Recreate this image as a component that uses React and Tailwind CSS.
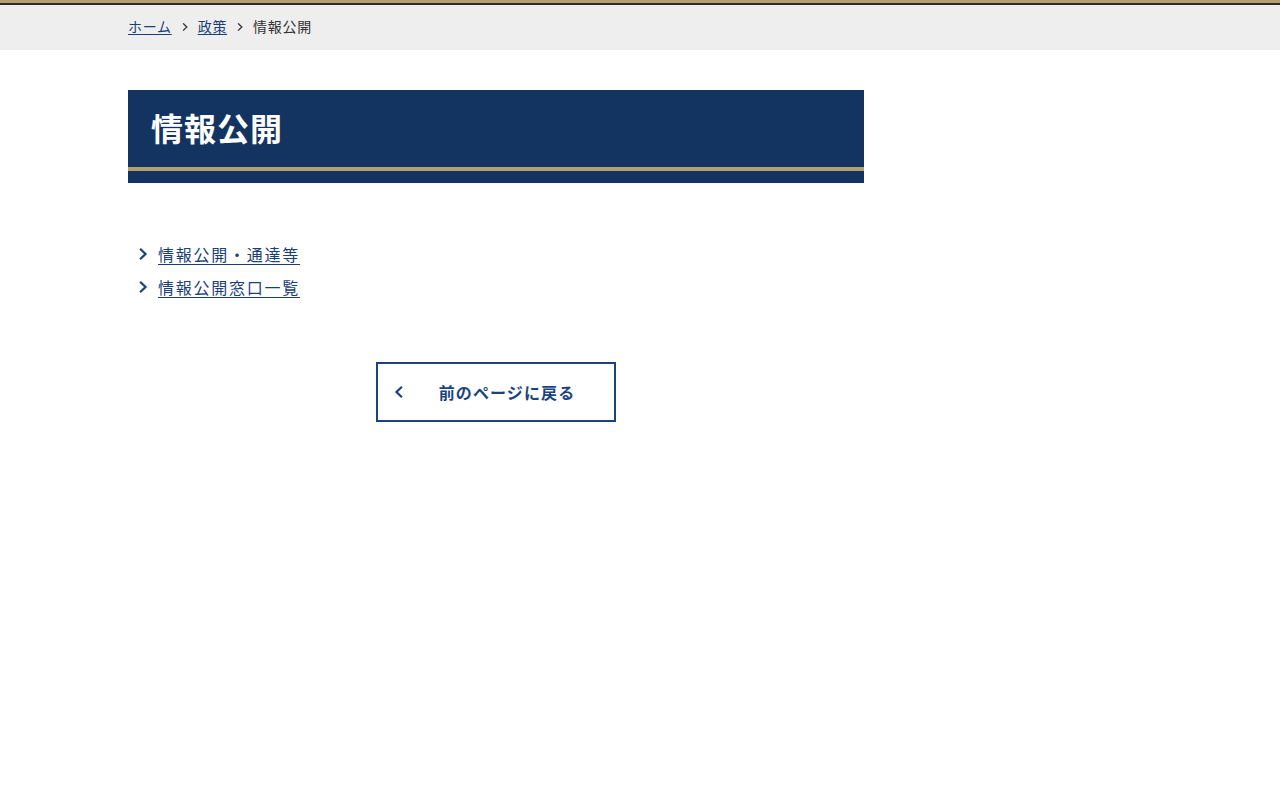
import React from "react";

const Chevron = ({ className = "", dir = "right", sw = "1.6" }) => (
  <svg viewBox="0 0 10 10" className={className} fill="none" stroke="currentColor" strokeWidth={sw} strokeLinecap="square">
    {dir === "right" ? <path d="M3.5 1.8 L6.8 5 L3.5 8.2" /> : <path d="M6.5 1.8 L3.2 5 L6.5 8.2" />}
  </svg>
);

export default function App() {
  return (
    <div className="min-h-[800px] bg-white" style={{ fontFamily: '"Noto Sans CJK JP", "Noto Sans", sans-serif' }}>
      <div className="h-[3px] bg-[#b3a06c]" />
      <div className="h-[2px] bg-[#2b2b2b]" />
      <div className="h-[45px] bg-[#eeeeee]">
        <nav className="ml-[128px] flex h-full items-center pb-[2px] text-[14px] tracking-[0.05em] text-[#333]">
          <a href="#" className="text-[#1a3e78] underline underline-offset-2">ホーム</a>
          <Chevron sw="1.3" className="mx-[8px] h-[10px] w-[10px] text-[#333]" />
          <a href="#" className="text-[#1a3e78] underline underline-offset-2">政策</a>
          <Chevron sw="1.3" className="mx-[8px] h-[10px] w-[10px] text-[#333]" />
          <span>情報公開</span>
        </nav>
      </div>
      <div className="ml-[128px] mt-[40px] w-[736px]">
        <div className="bg-[#133460]">
          <h1 className="flex h-[77px] items-center pb-[3px] pl-[23px] text-[32px] font-bold leading-none tracking-[0.03em] text-white">情報公開</h1>
          <div className="h-[4px] bg-[#b3a06c]" />
          <div className="h-[12px]" />
        </div>
        <ul className="mt-[59px] flex flex-col gap-[9px]">
          <li className="flex h-[24px] items-center">
            <Chevron className="ml-[8px] mr-[8px] h-[14px] w-[14px] text-[#1a4480]" />
            <a href="#" className="text-[16px] tracking-[0.11em] text-[#1a3e78] underline underline-offset-3">情報公開・通達等</a>
          </li>
          <li className="flex h-[24px] items-center">
            <Chevron className="ml-[8px] mr-[8px] h-[14px] w-[14px] text-[#1a4480]" />
            <a href="#" className="text-[16px] tracking-[0.11em] text-[#1a3e78] underline underline-offset-3">情報公開窓口一覧</a>
          </li>
        </ul>
        <div className="mt-[63px] flex justify-center">
          <a href="#" className="relative flex h-[60px] w-[240px] items-center justify-center border-2 border-[#1a4480] pl-[22px] text-[16px] font-bold tracking-[0.07em] text-[#1a4480]">
            <Chevron dir="left" className="absolute left-[14px] top-1/2 h-[14px] w-[14px] -translate-y-1/2" />
            前のページに戻る
          </a>
        </div>
      </div>
    </div>
  );
}
